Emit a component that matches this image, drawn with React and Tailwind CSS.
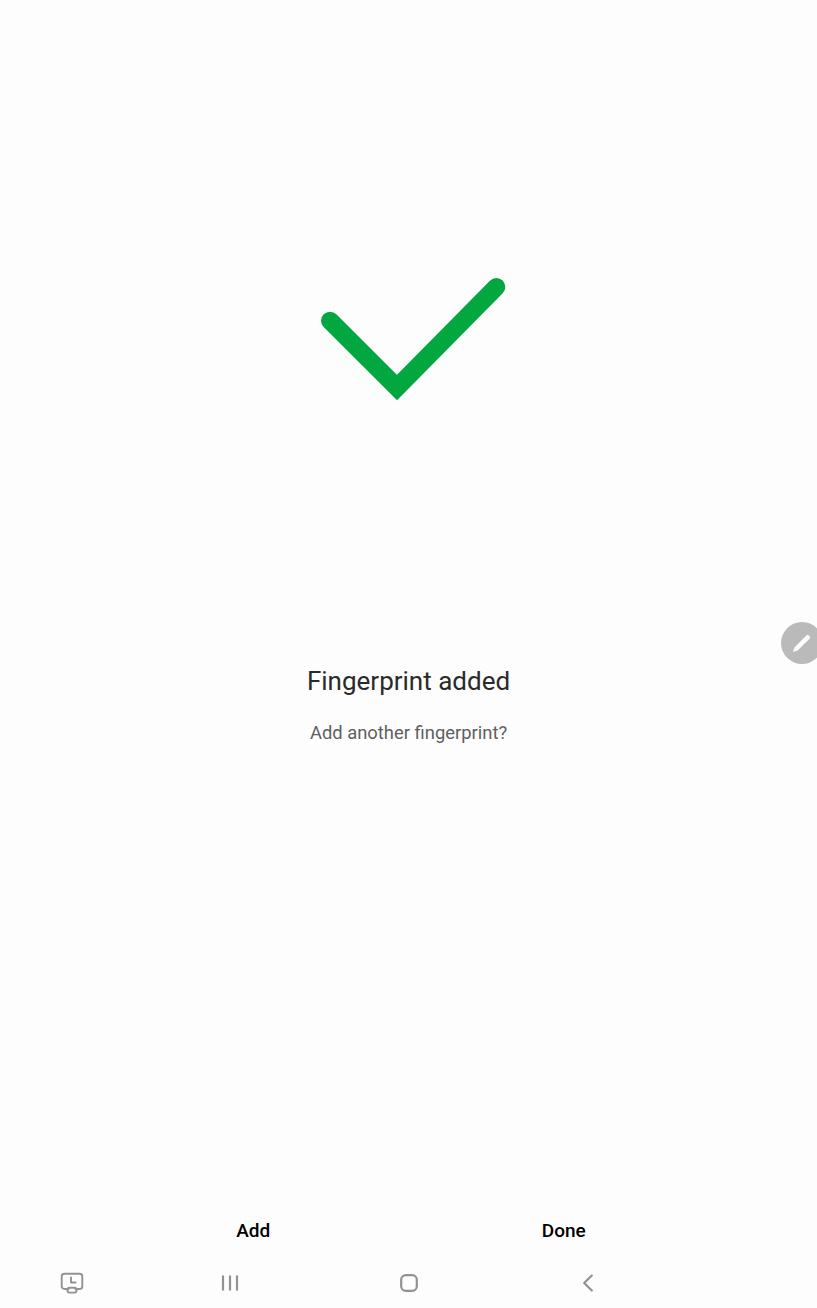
import React from 'react';

const PenBubble = () => (
  <div className="absolute left-[781px] top-[622px] w-[42px] h-[42px] rounded-full bg-[#bababa] flex items-center justify-center">
    <svg width="22" height="22" viewBox="0 0 22 22" fill="none">
      <path d="M2 20 L3.4 15.4 L15.6 3.2 Q16.6 2.2 17.6 3.2 L18.8 4.4 Q19.8 5.4 18.8 6.4 L6.6 18.6 Z" fill="#fdfdfd" />
    </svg>
  </div>
);

const RecentIcon = () => (
  <svg width="24" height="22" viewBox="0 0 24 22" fill="none" stroke="#929292" strokeWidth="1.9" strokeLinejoin="round" strokeLinecap="round">
    <path d="M8.5 17 H4.5 a2.8 2.8 0 0 1 -2.8 -2.8 V4.5 a2.8 2.8 0 0 1 2.8 -2.8 H19.5 a2.8 2.8 0 0 1 2.8 2.8 V14.2 a2.8 2.8 0 0 1 -2.8 2.8 H15.5" />
    <rect x="7.5" y="15.8" width="9" height="4.8" rx="2" />
    <path d="M11 5.5 V10.5 H15.5" />
  </svg>
);

const MenuIcon = () => (
  <svg width="18" height="18" viewBox="0 0 18 18" fill="none" stroke="#929292" strokeWidth="2.2">
    <path d="M2 1.5 V16.5 M9 1.5 V16.5 M16 1.5 V16.5" />
  </svg>
);

const HomeIcon = () => (
  <svg width="18" height="18" viewBox="0 0 18 18" fill="none" stroke="#929292" strokeWidth="2.2">
    <rect x="1.2" y="1.2" width="15.6" height="15.6" rx="4.6" />
  </svg>
);

const BackIcon = () => (
  <svg width="12" height="18" viewBox="0 0 12 18" fill="none" stroke="#929292" strokeWidth="2.2" strokeLinecap="round" strokeLinejoin="round">
    <path d="M9.8 1.5 L2.2 9 L9.8 16.5" />
  </svg>
);

export default function App() {
  return (
    <div className="relative w-[817px] h-[1308px] overflow-hidden bg-[#fdfdfd] flex flex-col font-['Roboto',sans-serif]">
      {/* check mark */}
      <div className="pt-[270px] pl-[310px]">
        <svg width="210" height="140" viewBox="0 0 210 140" fill="none">
          <path d="M20 50.7 L87 117.5 L186.3 17" stroke="#03a73f" strokeWidth="18" strokeLinecap="round" />
        </svg>
      </div>

      <div className="mt-[253px] flex flex-col items-center">
        <h1 className="text-[26px] leading-[36px] font-normal text-[#2a2a2a]">Fingerprint added</h1>
        <p className="mt-[22px] text-[18.4px] leading-[24px] text-[#5f5f5f]">Add another fingerprint?</p>
      </div>

      <div className="mt-auto flex px-[98px]">
        <button className="flex-1 h-[28px] text-[19px] font-[480] text-black text-center">Add</button>
        <button className="flex-1 h-[28px] text-[19px] font-[480] text-black text-center">Done</button>
      </div>

      <nav className="mt-[28px] mb-[15px] h-[20px] flex items-center">
        <div className="w-[141px] flex justify-end"><div className="w-[80px] flex justify-center mr-[29px]"><RecentIcon /></div></div>
        <div className="w-[178px] flex justify-center"><MenuIcon /></div>
        <div className="w-[179px] flex justify-center"><HomeIcon /></div>
        <div className="w-[180px] flex justify-center"><BackIcon /></div>
      </nav>

      <PenBubble />
    </div>
  );
}
